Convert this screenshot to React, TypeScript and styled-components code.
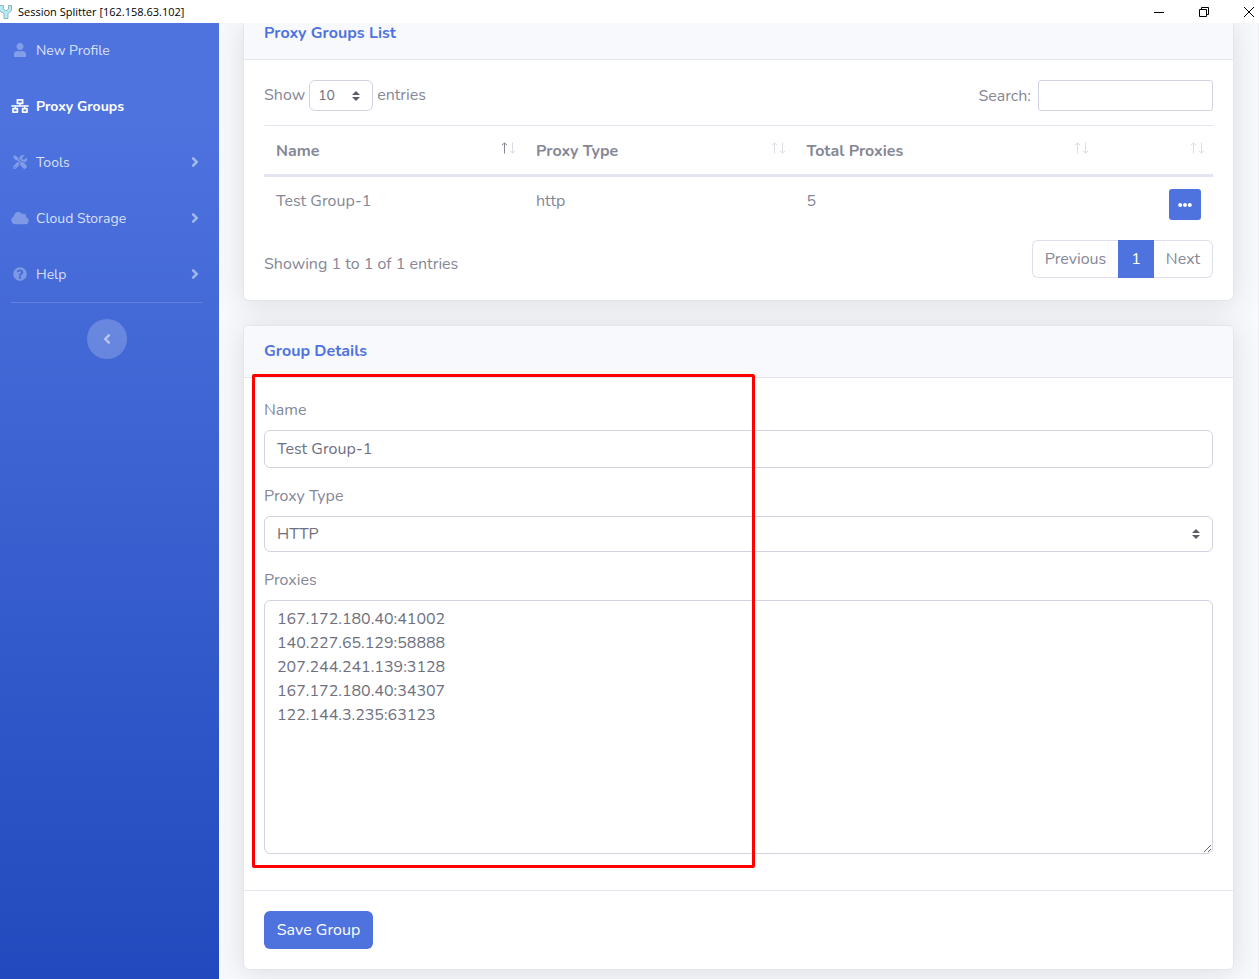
import React, { useState } from "react";
import styled, { createGlobalStyle, css } from "styled-components";
import {
  FaAngleLeft,
  FaAngleRight,
  FaCloud,
  FaEllipsisH,
  FaNetworkWired,
  FaQuestionCircle,
  FaTools,
  FaUser,
} from "react-icons/fa";

const primary = "#4e73df";
const line = "#e3e6f0";
const fieldLine = "#d1d3e2";
const textFont = 'Nunito, Lato, "Open Sans", sans-serif';

const GlobalStyle = createGlobalStyle`
  *, *::before, *::after { box-sizing: border-box; }
  body {
    margin: 0;
    background: #f8f9fc;
    color: #858796;
    font: 400 16px/24px ${textFont};
  }
  button, input, select, textarea { font: inherit; color: inherit; }
`;

const Window = styled.div`
  display: flex;
  flex-direction: column;
  min-height: 100vh;
`;

/* ---- Title bar ---- */

const TitleBar = styled.header`
  position: relative;
  z-index: 1;
  display: flex;
  align-items: center;
  justify-content: space-between;
  height: 23px;
  background: #fff;
  color: #000;
  font: 400 11px/23px "Segoe UI", "Open Sans", sans-serif;
`;

const AppTitle = styled.div`
  display: flex;
  align-items: center;
  gap: 5px;
`;

const WindowControls = styled.div`
  display: flex;
  gap: 29px;
  margin-right: 2px;
`;

const WindowButton = styled.button`
  display: grid;
  place-items: center;
  width: 16px;
  height: 20px;
  padding: 0;
  border: 0;
  background: none;
`;

/* ---- Sidebar ---- */

const Shell = styled.div`
  display: flex;
  flex: 1;
`;

const Sidebar = styled.nav`
  position: relative;
  z-index: 1;
  flex: 0 0 219px;
  background: linear-gradient(180deg, ${primary} 10%, #224abe 100%);
`;

const NavList = styled.ul`
  margin: 0;
  padding: 0;
  list-style: none;
`;

const NavLink = styled.a<{ $active?: boolean }>`
  display: flex;
  align-items: center;
  gap: 7px;
  height: 56px;
  padding: 0 20px 2px 11px;
  font-size: 14px;
  font-weight: ${(p) => (p.$active ? 700 : 400)};
  color: ${(p) => (p.$active ? "#fff" : "rgba(255, 255, 255, 0.8)")};
  text-decoration: none;
`;

const NavLabel = styled.span`
  padding-top: 2px;
`;

const NavIcon = styled.span<{ $active?: boolean }>`
  display: flex;
  width: 18px;
  color: ${(p) => (p.$active ? "#fff" : "rgba(255, 255, 255, 0.3)")};
  svg {
    width: 18px;
    height: 14px;
  }
`;

const NavArrow = styled(FaAngleRight)`
  margin-left: auto;
  width: 8px;
  height: 16px;
  color: rgba(255, 255, 255, 0.5);
`;

const NavDivider = styled.hr`
  margin: -1px 16px 16px 11px;
  border: 0;
  border-top: 1px solid rgba(255, 255, 255, 0.15);
`;

const CollapseButton = styled.button`
  display: grid;
  place-items: center;
  width: 40px;
  height: 40px;
  margin-left: 87px;
  padding: 0;
  border: 0;
  border-radius: 50%;
  background: rgba(255, 255, 255, 0.2);
  color: rgba(255, 255, 255, 0.5);
`;

/* ---- Content ---- */

const Content = styled.main`
  display: flex;
  flex: 1;
  flex-direction: column;
  gap: 24px;
  min-width: 0;
  padding: 0 24px 9px;
  border-right: 1px solid #eeeff5;
`;

const Card = styled.section<{ $scrolled?: boolean }>`
  position: relative;
  border: 1px solid ${line};
  border-radius: 6px;
  background: #fff;
  box-shadow: 0 2px 28px rgba(58, 59, 69, 0.15);
  ${(p) =>
    p.$scrolled &&
    css`
      border-top: 0;
      border-top-left-radius: 0;
      border-top-right-radius: 0;
    `}
`;

const CardHeader = styled.div<{ $scrolled?: boolean }>`
  padding: ${(p) => (p.$scrolled ? "1px" : "16px")} 20px 16px;
  border-bottom: 1px solid ${line};
  border-radius: ${(p) => (p.$scrolled ? "0" : "5px 5px 0 0")};
  background: #f8f9fc;
`;

const CardTitle = styled.h2`
  margin: 0;
  font-size: 16px;
  font-weight: 700;
  line-height: 19px;
  color: ${primary};
`;

const CardBody = styled.div`
  padding: 20px;
`;

const CardFooter = styled.div`
  padding: 20px;
  border-top: 1px solid ${line};
`;

/* ---- Form controls ---- */

const fieldBase = css`
  border: 1px solid ${fieldLine};
  border-radius: 6px;
  background-color: #fff;
  color: #6e707e;
  outline: none;
`;

const selectBase = css`
  ${fieldBase}
  appearance: none;
  background-image: url("data:image/svg+xml,%3Csvg xmlns='http://www.w3.org/2000/svg' viewBox='0 0 4 5'%3E%3Cpath fill='%235a5c69' d='M2 0L0 2h4zm0 5L0 3h4z'/%3E%3C/svg%3E");
  background-repeat: no-repeat;
  background-position: right 12px center;
  background-size: 8px 10px;
`;

const Field = styled.div`
  display: flex;
  flex-direction: column;
  gap: 8px;
  margin-bottom: 16px;
`;

const TextInput = styled.input`
  ${fieldBase}
  width: 100%;
  height: 38px;
  padding: 6px 12px;
`;

const Select = styled.select`
  ${selectBase}
  width: 100%;
  height: 36px;
  padding: 0 28px 0 12px;
`;

const TextArea = styled.textarea`
  ${fieldBase}
  display: block;
  width: 100%;
  height: 254px;
  padding: 6px 12px;
  resize: vertical;
`;

const PrimaryButton = styled.button`
  height: 38px;
  padding: 0 12px;
  min-width: 109px;
  border: 0;
  border-radius: 6px;
  background: ${primary};
  color: #fff;
`;

/* ---- Table ---- */

const TableTools = styled.div`
  display: flex;
  align-items: flex-start;
  justify-content: space-between;
  height: 31px;
  margin-bottom: 14px;
`;

const LengthLabel = styled.label`
  display: flex;
  align-items: baseline;
  gap: 4px;
`;

const SmallSelect = styled.select`
  ${selectBase}
  width: 64px;
  height: 31px;
  padding: 0 24px 0 8px;
  font-size: 14px;
`;

const SearchLabel = styled.label`
  display: flex;
  align-items: center;
  gap: 7px;
`;

const SearchInput = styled.input`
  ${fieldBase}
  width: 175px;
  height: 31px;
  padding: 4px 8px;
  border-radius: 3px;
  font-size: 14px;
`;

const Table = styled.table`
  width: 100%;
  table-layout: fixed;
  border-spacing: 0;
`;

const HeadCell = styled.th<{ $width: string }>`
  width: ${(p) => p.$width};
  height: 52px;
  padding: 0 8px 0 12px;
  border-top: 1px solid ${line};
  border-bottom: 3px solid ${line};
  text-align: left;
`;

const HeadContent = styled.div`
  display: flex;
  align-items: center;
  justify-content: space-between;
  height: 48px;
  padding-top: 1px;
  svg {
    margin: 0 0 5px auto;
  }
`;

const Cell = styled.td<{ $right?: boolean }>`
  padding: 12px 12px 8px;
  text-align: ${(p) => (p.$right ? "right" : "left")};
  vertical-align: top;
`;

const RowButton = styled.button`
  display: inline-grid;
  place-items: center;
  width: 32px;
  height: 31px;
  padding: 0;
  border: 0;
  border-radius: 3px;
  background: ${primary};
  color: #fff;
  vertical-align: top;
`;

const TableFooter = styled.div`
  display: flex;
  align-items: center;
  justify-content: space-between;
  margin-top: 12px;
  margin-bottom: 2px;
`;

const TableInfo = styled.div`
  padding-top: 10px;
`;

const Pagination = styled.div`
  display: flex;
`;

const PageButton = styled.button<{ $active?: boolean }>`
  height: 38px;
  min-width: 36px;
  padding: 0 11px;
  border: 1px solid ${(p) => (p.$active ? primary : "#dddfeb")};
  background: ${(p) => (p.$active ? primary : "#fff")};
  color: ${(p) => (p.$active ? "#fff" : "#858796")};
  &:first-child {
    min-width: 86px;
    border-right: 0;
    border-radius: 6px 0 0 6px;
  }
  &:last-child {
    min-width: 59px;
    border-left: 0;
    border-radius: 0 6px 6px 0;
  }
`;

/* Annotation frame drawn over the form fields */
const Highlight = styled.div`
  position: absolute;
  top: 48px;
  left: 8px;
  width: 503px;
  height: 494px;
  border: 3px solid #f00;
  border-radius: 2px;
  pointer-events: none;
`;

const AppLogo = () => (
  <svg width="13" height="16" viewBox="0 0 13 16" aria-hidden="true">
    <path
      d="M-0.5 1.5H3.5V5L6 7L8.5 5V1.5H11.5V6.5L8 9.5V14.5H4V9.5L-0.5 6.5Z"
      fill="#b5ecf5"
      stroke="#8fb3bb"
    />
  </svg>
);

const SortArrows = ({ ascending }: { ascending?: boolean }) => (
  <svg width="15" height="12" viewBox="0 0 15 12" fill="none" aria-hidden="true">
    <path d="M3.5 11.5V1M1 3L3.5 1L6 3" stroke={ascending ? "#858796" : "#dcdde2"} />
    <path d="M11.5 0.5V11M9 9L11.5 11L14 9" stroke="#dcdde2" />
  </svg>
);

const navItems = [
  { label: "New Profile", Icon: FaUser },
  { label: "Proxy Groups", Icon: FaNetworkWired, active: true },
  { label: "Tools", Icon: FaTools, expands: true },
  { label: "Cloud Storage", Icon: FaCloud, expands: true },
  { label: "Help", Icon: FaQuestionCircle, expands: true },
];

const columns = [
  { label: "Name", width: "27.4%" },
  { label: "Proxy Type", width: "28.5%" },
  { label: "Total Proxies", width: "31.9%" },
  { label: "", width: "12.2%" },
];

const initialProxies = [
  "167.172.180.40:41002",
  "140.227.65.129:58888",
  "207.244.241.139:3128",
  "167.172.180.40:34307",
  "122.144.3.235:63123",
].join("\n");

export default function App() {
  const [name, setName] = useState("Test Group-1");
  const [proxies, setProxies] = useState(initialProxies);

  return (
    <Window>
      <GlobalStyle />
      <TitleBar>
        <AppTitle>
          <AppLogo />
          <span>Session Splitter [162.158.63.102]</span>
        </AppTitle>
        <WindowControls>
          <WindowButton aria-label="Minimize">
            <svg width="10" height="10" stroke="#000">
              <path d="M0 5.5H10" />
            </svg>
          </WindowButton>
          <WindowButton aria-label="Restore">
            <svg width="10" height="10" fill="none" stroke="#000">
              <path d="M0.5 2.5H7.5V9.5H0.5ZM2.5 2.5V0.5H9.5V7.5H7.5" />
            </svg>
          </WindowButton>
          <WindowButton aria-label="Close">
            <svg width="10" height="10" stroke="#000">
              <path d="M0 0L10 10M10 0L0 10" />
            </svg>
          </WindowButton>
        </WindowControls>
      </TitleBar>

      <Shell>
        <Sidebar aria-label="Main">
          <NavList>
            {navItems.map(({ label, Icon, active, expands }) => (
              <li key={label}>
                <NavLink href="#" $active={active}>
                  <NavIcon $active={active}>
                    <Icon />
                  </NavIcon>
                  <NavLabel>{label}</NavLabel>
                  {expands && <NavArrow />}
                </NavLink>
              </li>
            ))}
          </NavList>
          <NavDivider />
          <CollapseButton aria-label="Collapse sidebar">
            <FaAngleLeft size={16} />
          </CollapseButton>
        </Sidebar>

        <Content>
          <Card $scrolled>
            <CardHeader $scrolled>
              <CardTitle>Proxy Groups List</CardTitle>
            </CardHeader>
            <CardBody>
              <TableTools>
                <LengthLabel>
                  Show
                  <SmallSelect defaultValue="10">
                    <option>10</option>
                    <option>25</option>
                    <option>50</option>
                    <option>100</option>
                  </SmallSelect>
                  entries
                </LengthLabel>
                <SearchLabel>
                  Search:
                  <SearchInput type="search" />
                </SearchLabel>
              </TableTools>
              <Table>
                <thead>
                  <tr>
                    {columns.map(({ label, width }, index) => (
                      <HeadCell key={width} scope="col" $width={width}>
                        <HeadContent>
                          {label}
                          <SortArrows ascending={index === 0} />
                        </HeadContent>
                      </HeadCell>
                    ))}
                  </tr>
                </thead>
                <tbody>
                  <tr>
                    <Cell>Test Group-1</Cell>
                    <Cell>http</Cell>
                    <Cell>5</Cell>
                    <Cell $right>
                      <RowButton aria-label="Group actions">
                        <FaEllipsisH size={14} />
                      </RowButton>
                    </Cell>
                  </tr>
                </tbody>
              </Table>
              <TableFooter>
                <TableInfo>Showing 1 to 1 of 1 entries</TableInfo>
                <Pagination>
                  <PageButton>Previous</PageButton>
                  <PageButton $active>1</PageButton>
                  <PageButton>Next</PageButton>
                </Pagination>
              </TableFooter>
            </CardBody>
          </Card>

          <Card>
            <CardHeader>
              <CardTitle>Group Details</CardTitle>
            </CardHeader>
            <CardBody>
              <Field>
                <label htmlFor="group-name">Name</label>
                <TextInput
                  id="group-name"
                  value={name}
                  onChange={(e) => setName(e.target.value)}
                />
              </Field>
              <Field>
                <label htmlFor="proxy-type">Proxy Type</label>
                <Select id="proxy-type" defaultValue="HTTP">
                  <option>HTTP</option>
                  <option>SOCKS4</option>
                  <option>SOCKS5</option>
                </Select>
              </Field>
              <Field>
                <label htmlFor="proxies">Proxies</label>
                <TextArea
                  id="proxies"
                  spellCheck={false}
                  value={proxies}
                  onChange={(e) => setProxies(e.target.value)}
                />
              </Field>
            </CardBody>
            <CardFooter>
              <PrimaryButton>Save Group</PrimaryButton>
            </CardFooter>
            <Highlight />
          </Card>
        </Content>
      </Shell>
    </Window>
  );
}
